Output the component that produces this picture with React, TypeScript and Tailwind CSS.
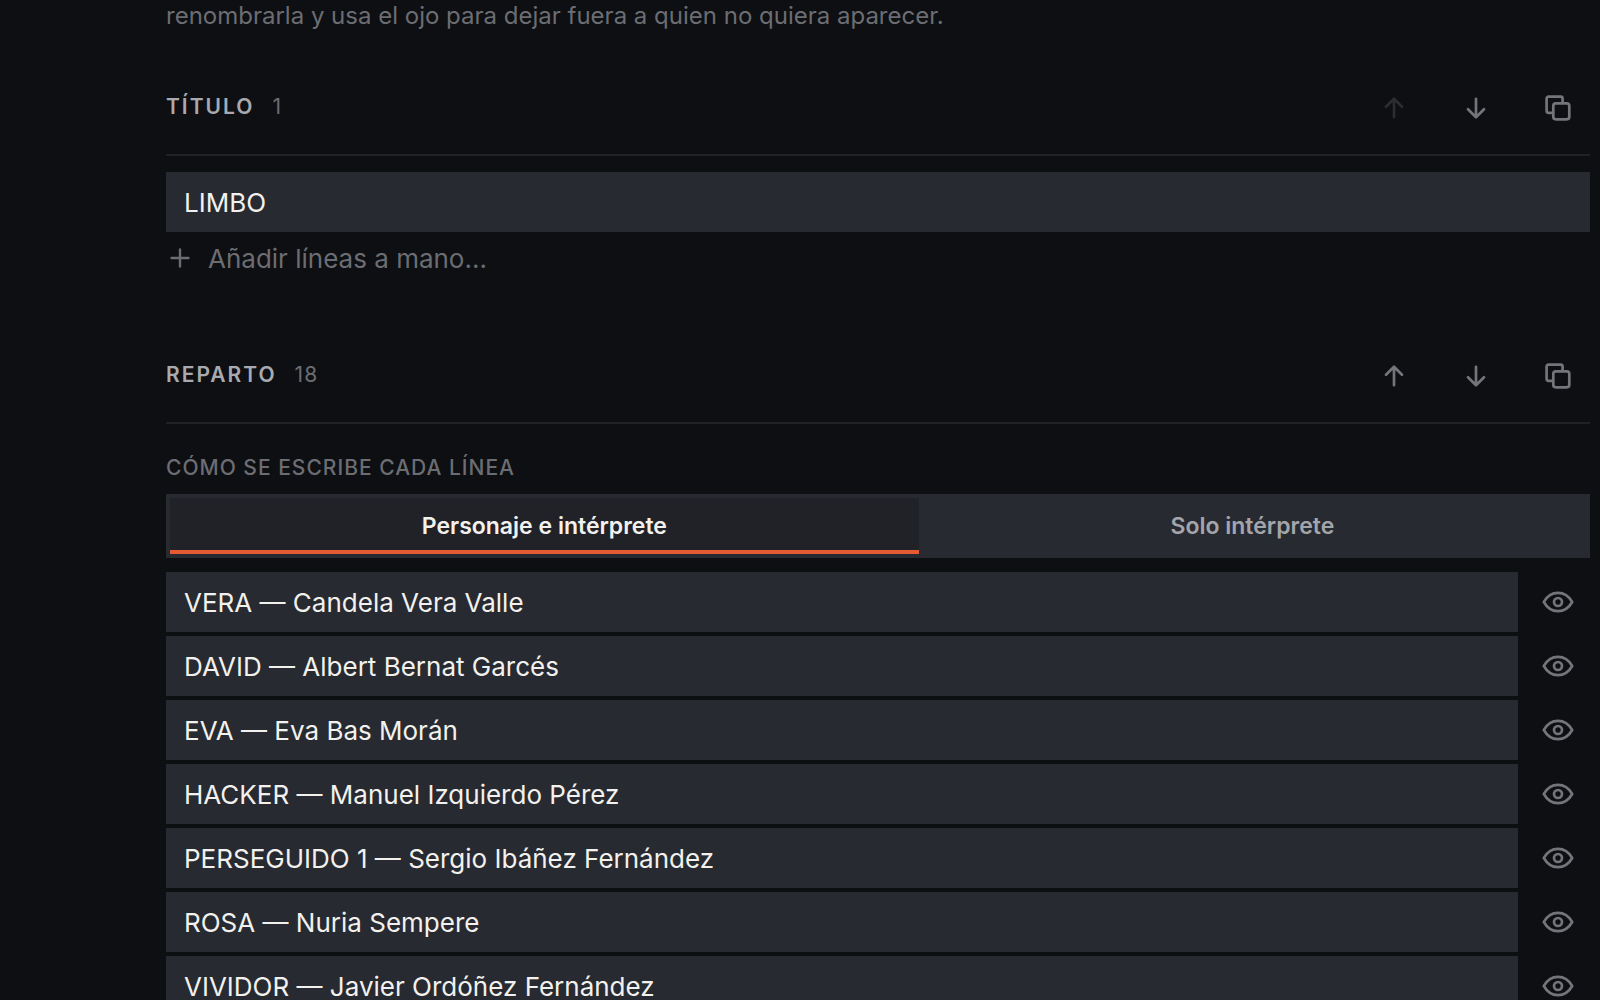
import { useState } from 'react';
import type { ReactNode } from 'react';

type CreditLine = {
  id: string;
  text: string;
};

const titleLines: CreditLine[] = [{ id: 'limbo', text: 'LIMBO' }];

const castLines: CreditLine[] = [
  { id: 'vera', text: 'VERA — Candela Vera Valle' },
  { id: 'david', text: 'DAVID — Albert Bernat Garcés' },
  { id: 'eva', text: 'EVA — Eva Bas Morán' },
  { id: 'hacker', text: 'HACKER — Manuel Izquierdo Pérez' },
  { id: 'perseguido-1', text: 'PERSEGUIDO 1 — Sergio Ibáñez Fernández' },
  { id: 'rosa', text: 'ROSA — Nuria Sempere' },
  { id: 'vividor', text: 'VIVIDOR — Javier Ordóñez Fernández' },
];

function Icon({ children }: { children: ReactNode }) {
  return (
    <svg
      viewBox="0 0 32 32"
      className="size-8"
      fill="none"
      stroke="currentColor"
      strokeWidth="2.7"
      strokeLinecap="round"
      strokeLinejoin="round"
      aria-hidden="true"
    >
      {children}
    </svg>
  );
}

const ArrowUpIcon = () => (
  <Icon>
    <path d="M16 25.2V6.8M8 14.8l8-8 8 8" />
  </Icon>
);

const ArrowDownIcon = () => (
  <Icon>
    <path d="M16 6.8v18.4M8 17.2l8 8 8-8" />
  </Icon>
);

const CopyIcon = () => (
  <Icon>
    <rect x="11.3" y="11.3" width="16" height="16" rx="2.5" />
    <path d="M11 20.8H6.6a2 2 0 0 1-2-2V6.6a2 2 0 0 1 2-2h12a2 2 0 0 1 2 2V11" />
  </Icon>
);

const EyeIcon = () => (
  <Icon>
    <path d="M1.8 16C5.4 9.7 10.2 6.9 16 6.9S26.6 9.7 30.2 16C26.6 22.3 21.8 25.1 16 25.1S5.4 22.3 1.8 16Z" />
    <circle cx="16" cy="16" r="4" />
  </Icon>
);

function IconButton({
  label,
  disabled,
  children,
}: {
  label: string;
  disabled?: boolean;
  children: ReactNode;
}) {
  return (
    <button
      type="button"
      aria-label={label}
      disabled={disabled}
      className="flex size-16 shrink-0 items-center justify-center text-[#74757a] hover:text-white disabled:text-[#2c2d31]"
    >
      {children}
    </button>
  );
}

function SectionHeader({ title, count, isFirst }: { title: string; count: number; isFirst?: boolean }) {
  return (
    <header className="flex items-center justify-between border-b-2 border-[#202226] pb-3.5">
      <div className="flex items-baseline gap-[18px] pb-0.5">
        <h2 className="text-[21px] leading-7 font-semibold tracking-[2px] text-[#a9aaaf] uppercase">{title}</h2>
        <span className="text-[21px] leading-7 tracking-[1px] text-[#6c6d72]">{count}</span>
      </div>
      <div className="flex gap-[18px]">
        <IconButton label={`Subir ${title}`} disabled={isFirst}>
          <ArrowUpIcon />
        </IconButton>
        <IconButton label={`Bajar ${title}`}>
          <ArrowDownIcon />
        </IconButton>
        <IconButton label={`Duplicar ${title}`}>
          <CopyIcon />
        </IconButton>
      </div>
    </header>
  );
}

function LineInput({ line }: { line: CreditLine }) {
  return (
    <input
      type="text"
      aria-label={`Línea ${line.text}`}
      defaultValue={line.text}
      className="h-[60px] min-w-0 flex-1 bg-[#272a30] px-[18px] text-[26px] text-[#f2f1ee] outline-none"
    />
  );
}

function ModeTab({ active, onClick, children }: { active: boolean; onClick: () => void; children: ReactNode }) {
  return (
    <button
      type="button"
      aria-pressed={active}
      onClick={onClick}
      className={`h-14 flex-auto border-b-4 pt-1 text-[23px] font-semibold ${
        active ? 'border-[#e35a33] bg-[#212227] text-[#f2f1ee]' : 'border-transparent text-[#a4a5ab]'
      }`}
    >
      {children}
    </button>
  );
}

export default function App() {
  const [mode, setMode] = useState<'both' | 'actor'>('both');

  return (
    <main className="h-screen overflow-hidden bg-[#0d0f12] pr-2.5 pl-[166px] font-[Inter,sans-serif]">
      <p className="text-[24px] leading-8 text-[#6c6d72]">
        renombrarla y usa el ojo para dejar fuera a quien no quiera aparecer.
      </p>

      <section className="mt-11">
        <SectionHeader title="Título" count={1} isFirst />
        <div className="mt-4 flex">
          <LineInput line={titleLines[0]} />
        </div>
        <button type="button" className="flex h-[52px] items-center gap-3.5 text-[26px] text-[#6c6d72]">
          <svg
            viewBox="0 0 28 28"
            className="size-7"
            fill="none"
            stroke="currentColor"
            strokeWidth="2.4"
            strokeLinecap="round"
            aria-hidden="true"
          >
            <path d="M14 5.5v17M5.5 14h17" />
          </svg>
          Añadir líneas a mano…
        </button>
      </section>

      <section className="mt-[60px]">
        <SectionHeader title="Reparto" count={18} />
        <p className="mt-[30px] text-[21px] leading-7 font-medium tracking-[1px] text-[#6c6d72] uppercase">
          Cómo se escribe cada línea
        </p>
        <div className="mt-3 flex bg-[#272a30] p-1">
          <ModeTab active={mode === 'both'} onClick={() => setMode('both')}>
            Personaje e intérprete
          </ModeTab>
          <ModeTab active={mode === 'actor'} onClick={() => setMode('actor')}>
            Solo intérprete
          </ModeTab>
        </div>
        <ul className="mt-3.5 space-y-1">
          {castLines.map((line) => (
            <li key={line.id} className="flex h-[60px] items-center gap-2">
              <LineInput line={line} />
              <IconButton label={`Ocultar ${line.text}`}>
                <EyeIcon />
              </IconButton>
            </li>
          ))}
        </ul>
      </section>
    </main>
  );
}
